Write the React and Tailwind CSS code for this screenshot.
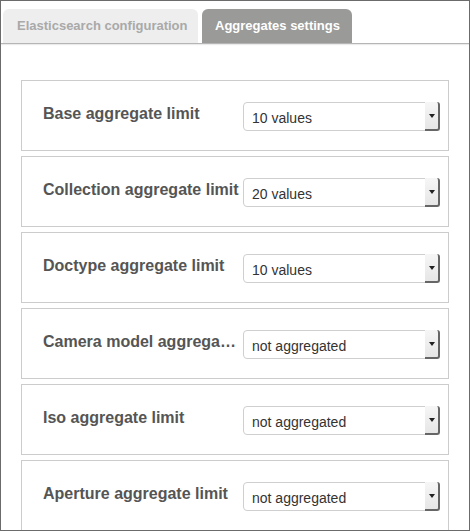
import React from 'react';

const rows = [
  { label: 'Base aggregate limit', value: '10 values' },
  { label: 'Collection aggregate limit', value: '20 values' },
  { label: 'Doctype aggregate limit', value: '10 values' },
  { label: 'Camera model aggregate limit', value: 'not aggregated' },
  { label: 'Iso aggregate limit', value: 'not aggregated' },
  { label: 'Aperture aggregate limit', value: 'not aggregated' },
];

function FakeSelect({ value }) {
  return (
    <div className="relative mt-[2px] flex h-[29px] w-[197px] shrink-0 items-center rounded-[4px] border border-[#cfcfcf] bg-white pl-[8px] text-[14px] text-[#333]">
      <span className="pt-[3px]">{value}</span>
      <div className="absolute right-[-1px] top-[-1px] bottom-[-1px] flex w-[15px] items-center justify-center rounded-r-[3px] border-r-2 border-b-2 border-[#666] bg-gradient-to-b from-[#f6f6f6] to-[#e6e6e6]">
        <div className="h-0 w-0 border-x-[3px] border-t-[4px] border-x-transparent border-t-[#222]" />
      </div>
    </div>
  );
}

export default function App() {
  return (
    <div className="h-[531px] w-[470px] overflow-hidden border border-[#6b6b6b] bg-white font-['Liberation_Sans',Arial,sans-serif]">
      <div className="flex gap-[4px] border-b border-[#b5b5b5] pl-[2px] pt-[8px] shadow-[0_1px_1px_rgba(0,0,0,0.08)]">
        <div className="flex h-[34px] w-[195px] items-center rounded-t-[6px] bg-[#eeeeee] pl-[14px] text-[13px] font-bold text-[#a9a9a9]">
          Elasticsearch configuration
        </div>
        <div className="flex h-[34px] w-[150px] items-center rounded-t-[6px] bg-[#9a9a98] pl-[13px] text-[13px] font-bold text-white">
          Aggregates settings
        </div>
      </div>
      <div className="flex flex-col gap-[5px] px-[20px] pt-[36px]">
        {rows.map((row) => (
          <div key={row.label} className="flex h-[71px] shrink-0 items-center border border-[#cccccc] pl-[21px]">
            <div className="mr-[3px] w-[197px] shrink-0 truncate pb-[4px] text-[16px] font-bold text-[#555]">
              {row.label}
            </div>
            <FakeSelect value={row.value} />
          </div>
        ))}
      </div>
    </div>
  );
}
